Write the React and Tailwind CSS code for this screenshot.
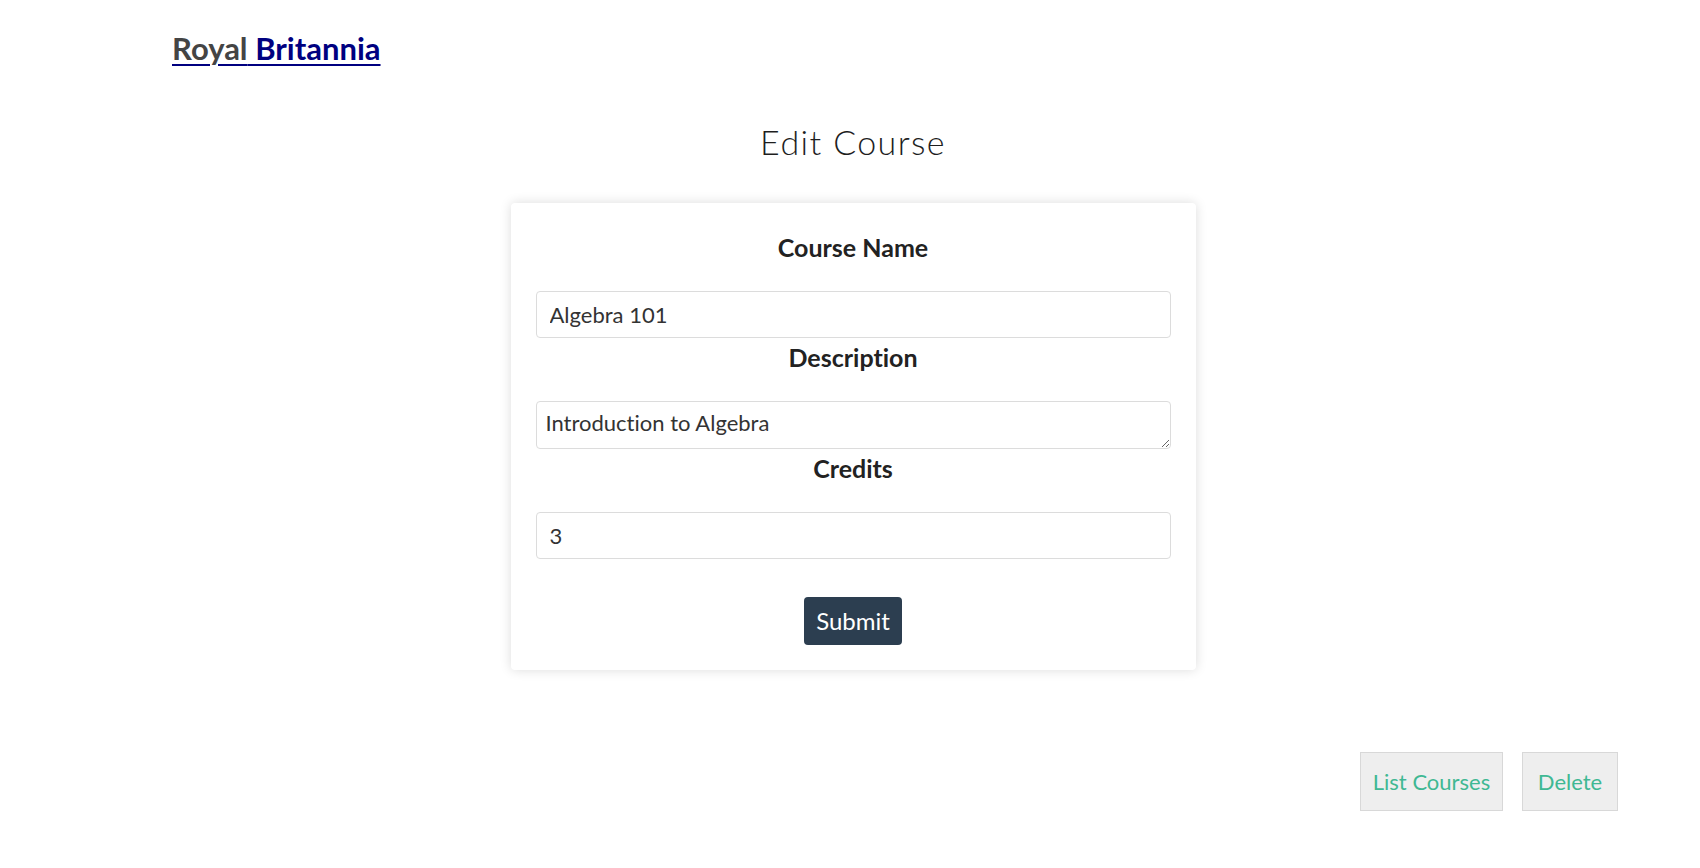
import React from 'react';

const font = { fontFamily: 'Lato, "Liberation Sans", sans-serif' };

function Field({ label, children }) {
  return (
    <div>
      <h3 className="text-center text-[25px] font-bold leading-[38px] text-[#222] mb-[25px]">{label}</h3>
      {children}
    </div>
  );
}

export default function App() {
  return (
    <div
      className="min-h-screen bg-white text-[#333] [font-variant-ligatures:no-common-ligatures]"
      style={font}
    >
      <header className="pl-[172px] pt-[30px]">
        <a href="#" className="text-[31px] font-bold leading-[37px] text-[#000080] underline underline-offset-[4px] decoration-[2px]">
          <span className="text-[#444]">Royal</span> Britannia
        </a>
      </header>

      <main className="flex flex-col items-center pl-[6px]">
        <h1 className="mt-[55px] text-[34px] font-light leading-[40px] tracking-[1.4px] text-[#1e1e1e]">Edit Course</h1>

        <form
          className="mt-[41px] w-[685px] rounded-[4px] bg-white p-[25px] shadow-[0_0_12px_rgba(0,0,0,0.14)]"
          onSubmit={(e) => e.preventDefault()}
        >
          <Field label="Course Name">
            <input
              type="text"
              defaultValue="Algebra 101"
              className="block h-[47px] w-full rounded-[4px] border border-[#dcdcdc] px-[13px] text-[22px] text-[#333] outline-none"
            />
          </Field>
          <Field label="Description">
            <textarea
              defaultValue="Introduction to Algebra"
              rows={1}
              className="block h-[48px] w-full rounded-[4px] border border-[#dcdcdc] pl-[9px] pt-[8px] text-[22px] leading-[26px] text-[#333] outline-none"
            />
          </Field>
          <Field label="Credits">
            <input
              type="text"
              defaultValue="3"
              className="block h-[47px] w-full rounded-[4px] border border-[#dcdcdc] px-[13px] text-[22px] text-[#333] outline-none"
            />
          </Field>
          <div className="mt-[38px] flex justify-center">
            <button type="submit" className="h-[48px] w-[98px] rounded-[4px] bg-[#2c3e50] text-[24px] text-white">
              Submit
            </button>
          </div>
        </form>
      </main>

      <div className="mt-[82px] flex justify-end gap-[19px] pr-[82px]">
        <button className="h-[59px] w-[143px] border border-[#d8d8d8] bg-[#eeeeee] text-[22px] text-[#3fb893]">List Courses</button>
        <button className="h-[59px] w-[96px] border border-[#d8d8d8] bg-[#eeeeee] text-[22px] text-[#3fb893]">Delete</button>
      </div>
    </div>
  );
}
